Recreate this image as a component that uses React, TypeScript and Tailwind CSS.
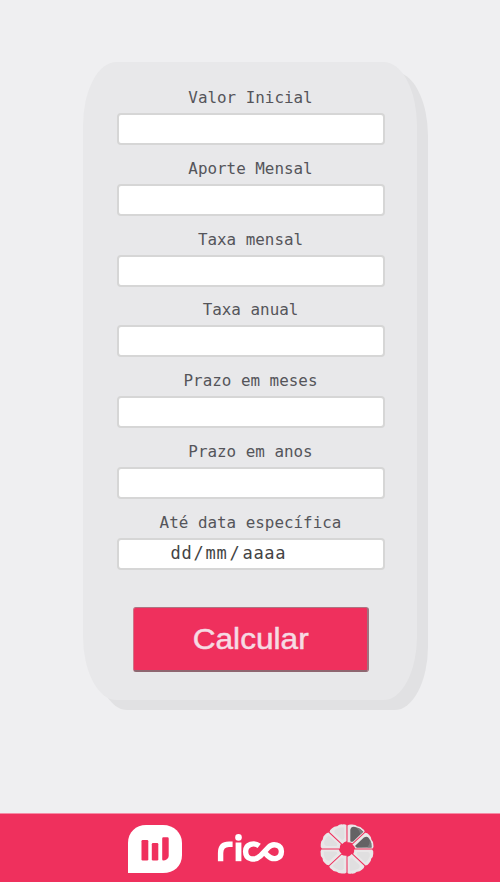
const labels = [
  'Valor Inicial',
  'Aporte Mensal',
  'Taxa mensal',
  'Taxa anual',
  'Prazo em meses',
  'Prazo em anos',
  'Até data específica',
];

function ChartLogo() {
  return (
    <svg width="54" height="48" viewBox="0 0 54 48">
      <path d="M0 48V18C0 7 8 0 18 0H35C46 0 54 8 54 18V30C54 41 46 48 35 48Z" fill="#fff" />
      <rect x="13.5" y="15" width="6.8" height="20.5" rx="1.2" fill="#ef305d" />
      <rect x="23.8" y="18" width="6.5" height="17.5" rx="1.2" fill="#ef305d" />
      <path d="M34.2 13.5q0-1.2 1.2-1.2h4.1q1.2 0 1.2 1.2V31q0 2-1.8 3.2T35.3 35.5q-1.1 0-1.1-1.2Z" fill="#ef305d" />
    </svg>
  );
}

function RicoLogo() {
  return (
    <svg width="68" height="30" viewBox="0 0 68 30" role="img" aria-label="rico" fill="none" stroke="#fff" strokeWidth="5.4">
      <path d="M3.6 27.2V19Q3.6 10.3 12 10.3H15.6" />
      <path d="M21.5 8.5V27.2" strokeWidth="5.8" />
      <circle cx="21.5" cy="3.4" r="3.3" fill="#fff" stroke="none" />
      <path d="M42.2 11.9C37.4 8.2 28.6 9.6 28.6 17.5C28.6 26.5 38.5 26.6 43.2 22L51.3 13.5C56 8.7 64.4 10.8 64.4 17.5C64.4 25 55.8 26.7 50.8 21.8L48.6 19.6" />
    </svg>
  );
}

function CitrusLogo() {
  return (
    <svg width="54" height="50" viewBox="-27 -25 54 50">
      <g transform="scale(1.03 0.96)">
        {Array.from({ length: 8 }, (_, i) => (
          <g key={i} transform={`rotate(${i * 45})`}>
            <path d="M.5-7V-24.4Q2-26 5-25.5Q8.5-25.5 10-23.6Q13.5-23.4 15-21.2Q17-20 17.2-18L5.3-6Q3.2-7.2 .5-7Z" fill="#e9e7e8" />
            <path
              d={
                i < 2
                  ? 'M3.2-8V-20Q4-24 8-22.8Q13-21.5 15.8-17.9L6-7.8Q4.5-7 3.2-8Z'
                  : 'M3.2-10V-20Q4-23 8-22Q12-20.5 14-17.8L6.6-10.2Q4.4-8.7 3.2-10Z'
              }
              fill={i < 2 ? '#646264' : '#e0dfe0'}
            />
            {i < 2 && <path d="M9-22.6Q13-21.5 15.8-17.9L13-15.1Q12-19.5 9-22.6Z" fill="#7c797b" />}
          </g>
        ))}
      </g>
    </svg>
  );
}

export default function App() {
  return (
    <div className="flex h-[882px] w-[500px] flex-col overflow-hidden bg-[#efeff1]">
      <main className="flex-1 pt-[62px] pl-[83px]">
        <form
          className="flex h-[638px] w-[334px] flex-col items-center rounded-[10%] bg-[#e8e8ea] pt-[23px] pl-[2px] shadow-[11px_10px_0_#e1e1e3]"
          onSubmit={(e) => e.preventDefault()}
        >
          {labels.map((label, i) => (
            <label key={label} className="flex h-[70.75px] w-[268px] shrink-0 flex-col items-center gap-[3px]">
              <span className="h-[25px] -translate-x-[0.5px] whitespace-nowrap font-['DejaVu_Sans_Mono',monospace] text-[15.9px] leading-[25px] text-[#55555a]">
                {label}
              </span>
              {i < 6 ? (
                <input className="h-8 w-full rounded-[4px] border-2 border-[#d6d6d6] bg-white px-3 outline-none" />
              ) : (
                <span className="flex h-8 w-full items-center rounded-[4px] border-2 border-[#d6d6d6] bg-white pt-px pl-[51.5px] font-['DejaVu_Sans_Mono',monospace] text-[17px] tracking-[0.7px] text-[#444]">
                  <span className="w-[23px]">dd</span>
                  <span className="w-[12px]">/</span>
                  <span className="w-[24px]">mm</span>
                  <span className="w-[13px]">/</span>
                  <span>aaaa</span>
                </span>
              )}
            </label>
          ))}
          <button className="mt-[27px] h-[65px] w-[236px] shrink-0 rounded-[3px] border border-t-[#ad7482] border-r-2 border-r-[#a0727e] border-b-2 border-b-[#8e6670] border-l-[#d07387] bg-[#ef305d] font-['Liberation_Sans',Arial,sans-serif] text-[29px] leading-none text-[#f6dbe3]">
            <span className="inline-block translate-x-[0.5px] scale-x-[1.09] [-webkit-text-stroke:0.5px_#f6dbe3]">Calcular</span>
          </button>
        </form>
      </main>
      <footer className="flex h-[69px] shrink-0 items-center border-t border-[#f58ba5] bg-[#ef305d] pt-[2px] pl-[128px]">
        <ChartLogo />
        <div className="ml-[35px]">
          <RicoLogo />
        </div>
        <div className="ml-[35px]">
          <CitrusLogo />
        </div>
      </footer>
    </div>
  );
}
